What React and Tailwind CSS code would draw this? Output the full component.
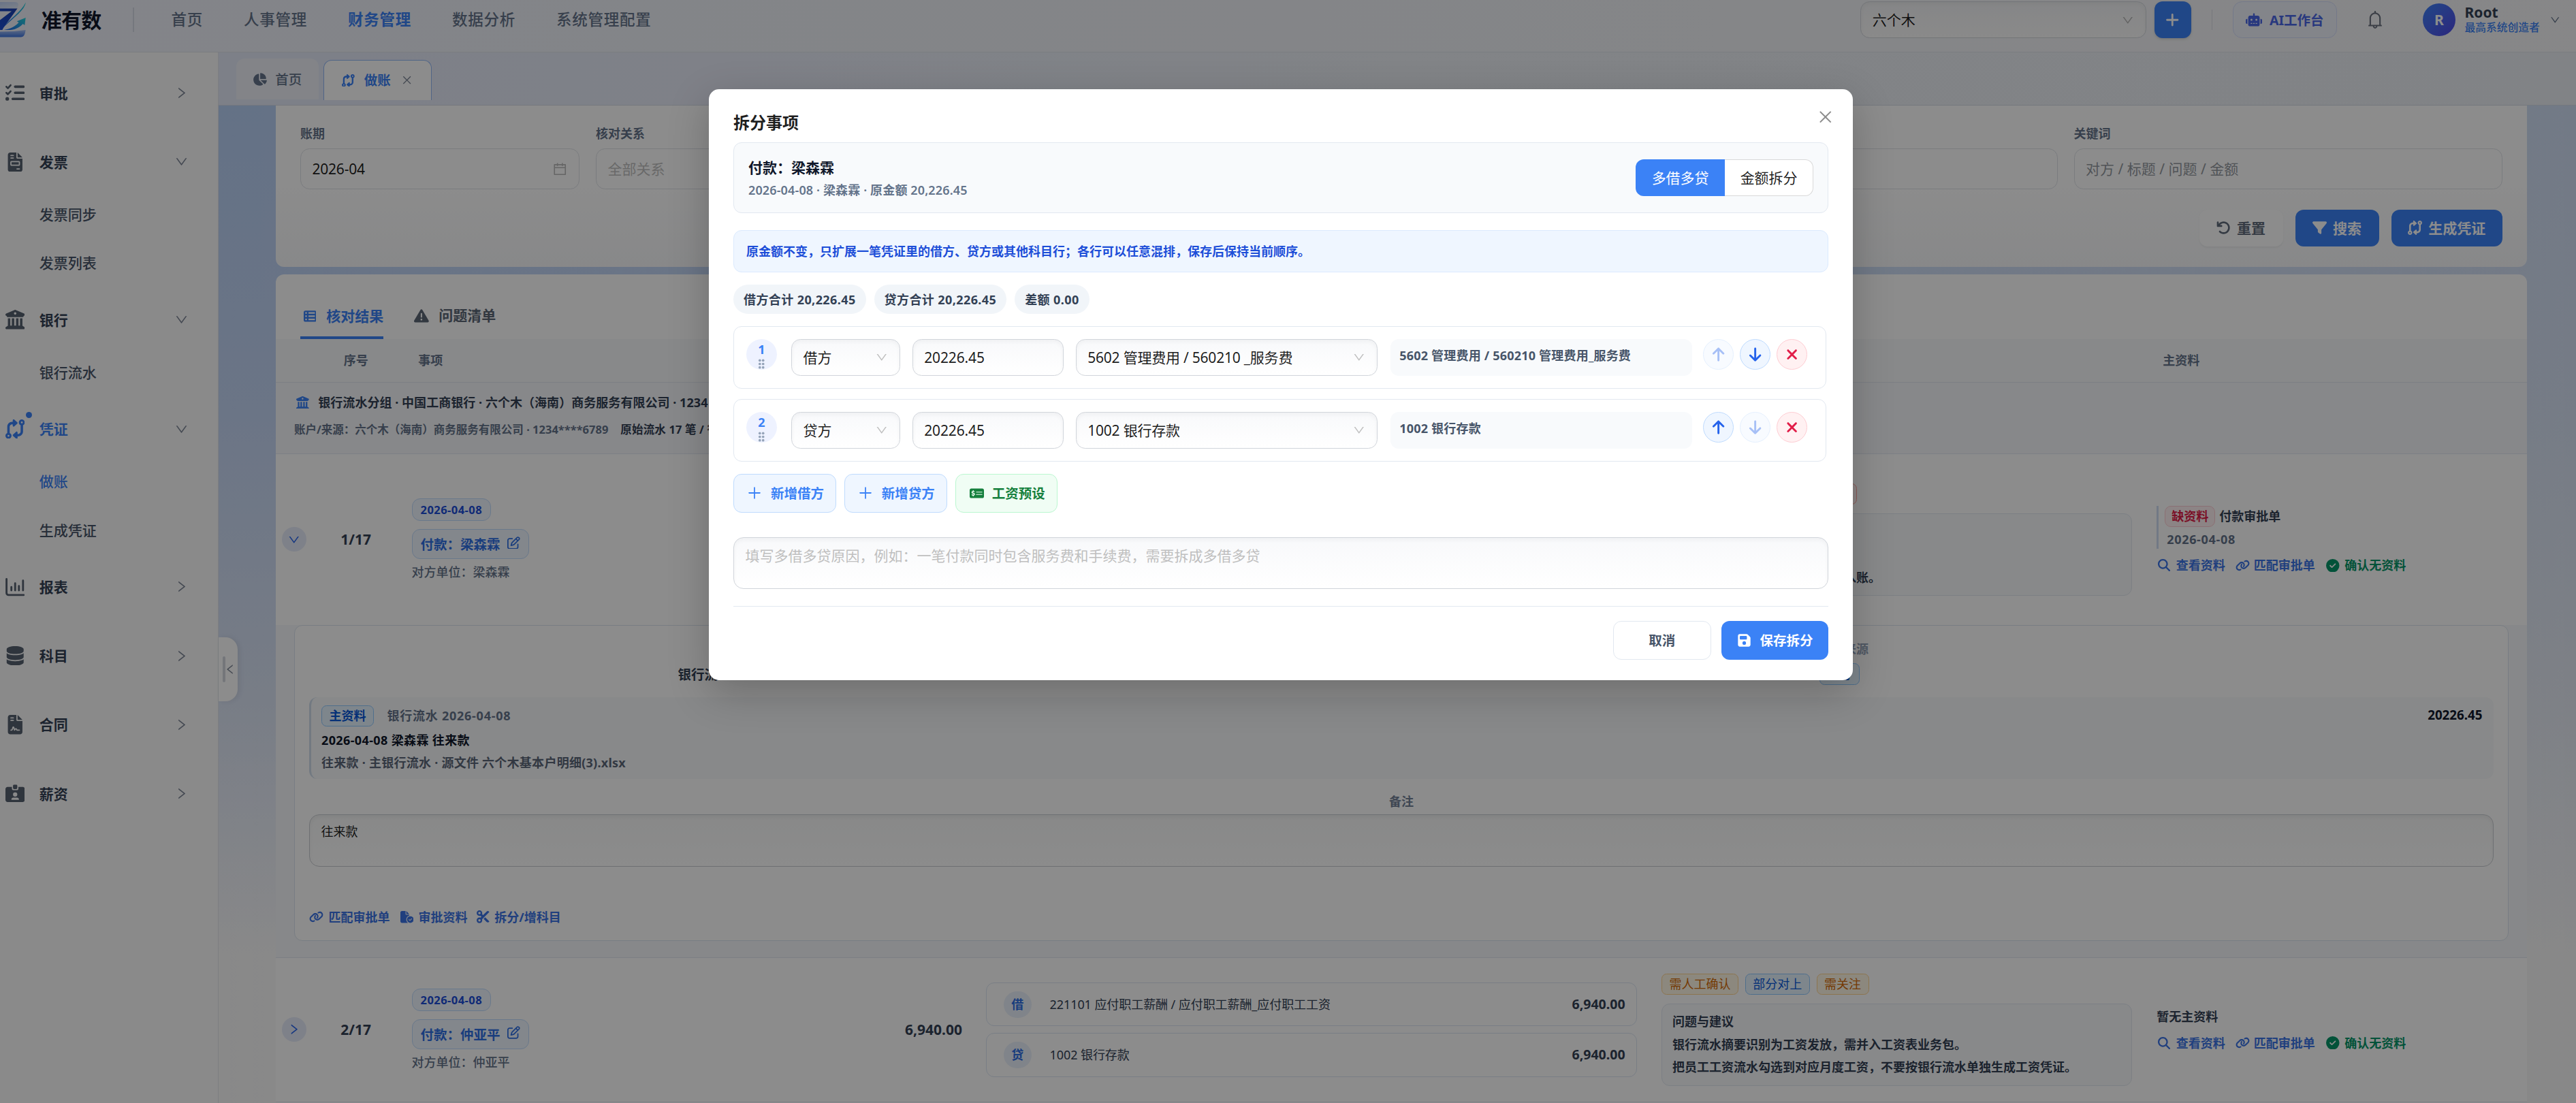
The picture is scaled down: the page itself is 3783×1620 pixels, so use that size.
import React from 'react';
import {
  AiOutlineDown,
  AiOutlineRight,
  AiOutlineLeft,
  AiOutlineClose,
  AiOutlineCalendar,
  AiOutlinePlus,
  AiOutlineBell,
} from 'react-icons/ai';
import {
  FaListCheck,
  FaFileInvoice,
  FaBuildingColumns,
  FaCodeCompare,
  FaDatabase,
  FaFileContract,
  FaIdCardClip,
  FaChartPie,
  FaRobot,
  FaArrowRotateLeft,
  FaFilter,
  FaTableList,
  FaTriangleExclamation,
  FaRegPenToSquare,
  FaLink,
  FaMagnifyingGlass,
  FaCircleCheck,
  FaScissors,
  FaFileCircleCheck,
  FaFloppyDisk,
  FaMoneyCheckDollar,
  FaPlus,
  FaArrowUp,
  FaArrowDown,
  FaXmark,
} from 'react-icons/fa6';

const ReportIcon = ({ className }) => (
  <svg viewBox="0 0 18 18" className={className} width="1em" height="1em" fill="none" stroke="currentColor" strokeWidth="1.8" strokeLinecap="round">
    <path d="M1 1.500v13a1.800 1.800 0 0 0 1.800 1.800H17" />
    <path d="M5.500 12V9M9 12V5.500M12.500 12V8M16.300 12V3" />
  </svg>
);

// drag handle, two columns of three dots
const GripIcon = ({ className }) => (
  <svg viewBox="0 0 7 11" className={className} fill="currentColor">
    <circle cx="1.700" cy="1.700" r="1.350" />
    <circle cx="5.300" cy="1.700" r="1.350" />
    <circle cx="1.700" cy="5.500" r="1.350" />
    <circle cx="5.300" cy="5.500" r="1.350" />
    <circle cx="1.700" cy="9.300" r="1.350" />
    <circle cx="5.300" cy="9.300" r="1.350" />
  </svg>
);

const navItems = ['首页', '人事管理', '财务管理', '数据分析', '系统管理配置'];

const menuGroups = [
  { label: '审批', icon: FaListCheck },
  { label: '发票', icon: FaFileInvoice, children: ['发票同步', '发票列表'] },
  { label: '银行', icon: FaBuildingColumns, children: ['银行流水'] },
  { label: '凭证', icon: FaCodeCompare, children: ['做账', '生成凭证'], active: true },
  { label: '报表', icon: ReportIcon },
  { label: '科目', icon: FaDatabase },
  { label: '合同', icon: FaFileContract },
  { label: '薪资', icon: FaIdCardClip },
];

const splitLines = [
  { no: 1, side: '借方', amount: '20226.45', account: '5602 管理费用 / 560210 _服务费', desc: '5602 管理费用 / 560210 管理费用_服务费' },
  { no: 2, side: '贷方', amount: '20226.45', account: '1002 银行存款', desc: '1002 银行存款' },
];

const tagStyles = {
  orange: 'border-[#ffd591] bg-[#fff7e6] text-[#d46b08]',
  blue: 'border-[#91caff] bg-[#e6f4ff] text-[#0958d9]',
  red: 'border-[#ffa39e] bg-[#fff1f0] text-[#cf1322]',
};

const Logo = () => (
  <div className="flex h-[36px] w-[25px] shrink-0 justify-end overflow-hidden">
    <svg viewBox="0 0 36 36" className="h-[36px] w-[36px] shrink-0">
      <defs>
        <linearGradient id="logoPale" x1="0" y1="0" x2="1" y2="1">
          <stop offset="0" stopColor="#b9cdf5" />
          <stop offset="1" stopColor="#e4ecfa" />
        </linearGradient>
        <linearGradient id="logoBlue" x1="0" y1="1" x2="1" y2="0">
          <stop offset="0" stopColor="#1d4fd8" />
          <stop offset="1" stopColor="#1a3fae" />
        </linearGradient>
        <linearGradient id="logoBase" x1="0" y1="0" x2="0" y2="1">
          <stop offset="0" stopColor="#a9c2f3" />
          <stop offset="1" stopColor="#3b74e0" />
        </linearGradient>
        <linearGradient id="logoCyan" x1="0" y1="1" x2="1" y2="0">
          <stop offset="0" stopColor="#2563eb" />
          <stop offset="1" stopColor="#22d3d8" />
        </linearGradient>
      </defs>
      <path d="M2 .7h23c3 0 4 1.500 3.500 3.500L27.500 7H2z" fill="url(#logoPale)" />
      <path d="M2 7h25.700L14 26l-1 2H2v-3L22 9.600H2z" fill="url(#logoBlue)" />
      <path d="M2 29.500c12 .5 24 0 33.700-1.500-.5 4.500-1.700 7-4.700 7H2z" fill="url(#logoBase)" />
      <path d="M35.900 1C34.500 9 26 14 14 25.500 20 17 31 11 35.900 1z" fill="url(#logoCyan)" />
      <path d="M14.500 27.700c6-.3 11-3 14.500-7l-1.800-1.200 8.600-3.500-1 7.300-1.700-1.300c-4 4.500-10 7-18.600 5.700z" fill="url(#logoCyan)" />
    </svg>
  </div>
);

const Header = () => (
  <header className="h-[51px] shrink-0 border-b border-[#dfe3ea] bg-linear-to-r from-[#eef1fa] via-[#f0f3f7] to-[#f6f6f7]">
    <div className="flex h-[39px] items-center">
      <Logo />
      <span className="ml-[15.500px] text-[20px] font-bold tracking-[-0.5px] text-[#0f172a]">准有数</span>
      <span className="ml-[31px] h-6 w-px bg-[#d5dbe5]" />
      <nav className="ml-[36.700px] flex gap-10">
        {navItems.map((item) => (
          <a
            key={item}
            className={
              item === '财务管理'
                ? 'text-[15px] font-bold tracking-[0.5px] text-[#3b82f6]'
                : 'text-[15px] font-medium tracking-[0.5px] text-[#64748b]'
            }
          >
            {item}
          </a>
        ))}
      </nav>
      <div className="ml-auto flex items-center">
        <div className="flex h-9 w-[279.500px] items-center justify-between rounded-[9px] border border-[#d1d5db] bg-linear-to-b from-[#f3f4f6] to-[#fbfbfb] px-[11px] text-sm text-black/90 shadow-[inset_0_2px_4px_rgba(0,0,0,0.04)]">
          <span>六个木</span>
          <AiOutlineDown className="text-[13px] text-[#b4b4b4]" />
        </div>
        <button className="ml-2 flex h-9 w-9 items-center justify-center rounded-lg bg-[#3b82f6] text-white shadow-sm">
          <FaPlus className="text-[15px]" />
        </button>
        <span className="ml-5 h-5 w-px bg-[#d9dde3]" />
        <button className="ml-5 flex h-9 w-[102px] items-center justify-center gap-[7px] rounded-[9px] border border-[#d3dcfa] bg-[#eef2fb] text-[13px] font-bold text-[#4a66e6]">
          <FaRobot className="text-[16px]" />
          AI工作台
        </button>
        <AiOutlineBell className="ml-[27px] text-[20px] text-[#6b7280]" />
        <span className="ml-[37px] flex h-8 w-8 items-center justify-center rounded-full bg-linear-to-br from-[#3b82f6] to-[#4f46e5] text-sm font-bold text-white">
          R
        </span>
        <div className="ml-[9px] w-[73px]">
          <div className="text-sm leading-[15px] font-bold text-[#334155]">Root</div>
          <div className="text-[10.500px] leading-[15px] font-medium whitespace-nowrap text-[#3b82f6]">最高系统创造者</div>
        </div>
        <AiOutlineDown className="mr-[15px] ml-[10px] text-[11px] text-[#64748b]" />
      </div>
    </div>
  </header>
);

const Sidebar = () => (
  <aside className="w-[214px] shrink-0 border-r border-[#e3e6ec] bg-[#fcfcfc] pt-[20px]">
    {menuGroups.map(({ label, icon: Icon, children, active }) => (
      <div key={label} className={children ? 'mb-[15.500px]' : 'mb-[27.500px]'}>
        <div className={`flex h-10 items-center text-sm font-bold ${active ? 'text-[#3b82f6]' : 'text-[#334155]'}`}>
          <span className="relative ml-[5px] flex w-[19px] justify-center">
            <Icon className={active ? 'text-[19px]' : 'text-[19px] text-[#566170]'} />
            {active && <span className="absolute -top-[7px] -right-[7px] h-[6px] w-[6px] rounded-full bg-[#3b82f6]" />}
          </span>
          <span className="ml-[14.500px]">{label}</span>
          {children ? (
            <AiOutlineDown className="mr-[29px] ml-auto text-[14px] text-[#7d8696]" />
          ) : (
            <AiOutlineRight className="mr-[28.500px] ml-auto text-[14px] text-[#7d8696]" />
          )}
        </div>
        {children && (
          <div className="mt-[11.500px] flex flex-col gap-[7.500px]">
            {children.map((child) => (
              <div
                key={child}
                className={`mr-[26px] flex h-10 items-center rounded-r-lg pl-[38.500px] text-sm font-medium ${
                  child === '做账' ? 'text-[#3b82f6]' : 'text-[#475569]'
                }`}
              >
                {child}
              </div>
            ))}
          </div>
        )}
      </div>
    ))}
  </aside>
);

const TabBar = () => (
  <div className="flex h-[52.300px] shrink-0 items-start gap-[4.500px] border-b border-[#d5dae6] bg-linear-to-r from-[#e3e9f8] via-[#edf0f6] to-[#eceff5] pt-[6.500px] pl-[17px]">
    <div className="flex h-10 w-[81px] items-center justify-center gap-[8px] rounded-lg rounded-b-none bg-[#eef1f8] text-[13px] font-medium text-[#64748b]">
      <FaChartPie className="text-[14px]" />
      首页
    </div>
    <div className="mt-px flex h-[39.500px] w-[106px] items-center justify-center gap-[9px] rounded-lg rounded-b-none border border-b-0 border-[#93b8f5] bg-white text-[13px] font-bold text-[#3b82f6]">
      <FaCodeCompare className="text-[12.500px]" />
      <span>做账</span>
      <AiOutlineClose className="ml-px text-[11.500px] text-[#7d8696]" />
    </div>
  </div>
);

const Field = ({ label, value, placeholder, icon, grow }) => (
  <div className={grow ? 'flex-1' : 'w-[273.400px] shrink-0'}>
    <div className="h-[14px] text-xs leading-[14px] font-bold text-[#64748b]">{label}</div>
    <div className="mt-[7px] flex h-10 items-center justify-between rounded-[9px] border border-[#dfe2e7] bg-white px-[11px] text-sm">
      {value ? <span className="tracking-[-0.150px] text-black/90">{value}</span> : <span className={grow ? 'text-[#94999f]' : 'text-[#bfbfbf]'}>{placeholder}</span>}
      {icon}
    </div>
  </div>
);

const FilterCard = () => (
  <section className="h-[158.100px] shrink-0 rounded-b-lg bg-linear-to-b from-white via-white to-[#f7f8fa] px-6 pt-[21px]">
    <div className="flex gap-4">
      <Field label="账期" value="2026-04" icon={<AiOutlineCalendar className="text-[15px] text-[#b8b8b8]" />} />
      <Field label="核对关系" placeholder="全部关系" />
      <Field />
      <Field />
      <Field />
      <Field />
      <Field label="关键词" placeholder="对方 / 标题 / 问题 / 金额" grow />
    </div>
    <div className="mt-[20px] flex justify-end gap-3 text-sm font-bold">
      <button className="flex h-9 items-center gap-[6px] rounded-lg bg-white px-[17px] text-[#5f6b7a] shadow-[0_1px_2px_rgba(0,0,0,0.05)]">
        <FaArrowRotateLeft className="text-[14px]" />
        重置
      </button>
      <button className="flex h-9 items-center gap-[6px] rounded-lg bg-[#3b82f6] px-[17px] text-white">
        <FaFilter className="text-[14px]" />
        搜索
      </button>
      <button className="flex h-9 items-center gap-[6px] rounded-lg bg-[#3b82f6] px-[16.500px] text-white">
        <FaCodeCompare className="text-[14px]" />
        生成凭证
      </button>
    </div>
  </section>
);

const rowGrid = 'grid grid-cols-[36px_85px_362px_200px_661.700px_484.800px_1fr] items-center';

const Tag = ({ color, bold, children }) => (
  <span className={`inline-flex h-[21px] items-center rounded-[5px] border px-[7px] text-xs ${bold ? 'font-bold' : ''} ${tagStyles[color]}`}>
    {children}
  </span>
);

const Subject = ({ name }) => (
  <div className="flex flex-col items-start px-3">
    <span className="flex h-[22px] items-center rounded-lg border border-[#bfdbfe] bg-[#eff6ff] px-2 pt-px text-[11px] font-bold tracking-[0.3px] text-[#1d4ed8]">
      2026-04-08
    </span>
    <span className="mt-2 flex h-[29px] items-center gap-[7px] rounded-lg border border-[#bfdbfe] bg-[#eff6ff] px-2 pt-px text-[13px] font-bold text-[#2f6fe4]">
      付款：{name}
      <FaRegPenToSquare className="-mt-[4px] text-[12.500px]" />
    </span>
    <span className="mt-[5px] text-xs leading-4 font-medium text-[#64748b]">对方单位：{name}</span>
  </div>
);

const MaterialLinks = () => (
  <div className="flex items-center text-xs font-bold text-[#3b74e6]">
    <FaMagnifyingGlass className="mr-[6px] ml-px text-[12px]" />
    查看资料
    <FaLink className="mr-[4px] ml-[10px] text-[14px]" />
    匹配审批单
    <FaCircleCheck className="mr-[5px] ml-[11px] text-[13px] text-[#059669]" />
    <span className="text-[#059669]">确认无资料</span>
  </div>
);

const Issues = ({ tags, lines }) => (
  <div className="px-3">
    <div className="flex gap-[6.500px]">{tags}</div>
    <div className="mt-[8.500px] h-[80.500px] rounded-lg border border-[#e2e8f0] bg-[#f8fafc] px-[10px] pt-[6px] text-xs leading-[22.500px] font-bold text-[#334155]">
      {lines.map((line) => (
        <div key={line}>{line}</div>
      ))}
    </div>
  </div>
);

const Entry = ({ side, account, amount }) => (
  <div className="flex h-[43px] items-center rounded-lg border border-[#dce6f3] bg-white pr-[11px] pl-[17px] text-xs text-[#334155]">
    <span className="flex h-[26px] w-[27px] items-center justify-center rounded-full bg-[#eaf1fb] font-bold text-[#2f6fe4]">{side}</span>
    <span className="ml-[18px] tracking-[-0.050px]">{account}</span>
    <span className="ml-auto text-[13px] font-bold text-[#334155]">{amount}</span>
  </div>
);

const DetailPanel = () => (
  <div className="h-[326px] shrink-0 border-b border-[#e2e8f0] bg-[#f6f8fb] px-[18px]">
    <div className="h-[309.500px] rounded-lg border border-[#dbe4ee] bg-white px-[14px]">
      <div className="flex h-[70px] justify-between">
        <span className="mt-[38px] ml-[361px] text-[13px] leading-5 font-bold text-[#334155]">银行流</span>
        <div className="mt-[14px] mr-[621px] flex flex-col items-end text-xs font-bold text-[#94a3b8]">
          <span className="-mr-[9px] leading-[18px]">来源</span>
          <span className="mt-[5px] flex"><Tag color="blue" bold>银行</Tag></span>
        </div>
      </div>
      <div className="flex h-[80.500px] justify-between rounded-lg border-l-2 border-[#cfddec] bg-[#f8fafc] pt-2 pr-[11px] pl-[10px] text-xs font-bold">
        <div>
          <div className="flex h-[21px] items-center gap-[13px] text-[#64748b]">
            <Tag color="blue" bold>主资料</Tag>
            <span className="tracking-[0.500px]">银行流水 2026-04-08</span>
          </div>
          <div className="mt-[3.500px] leading-5 tracking-[0.250px] text-[#0f172a]">2026-04-08 梁森霖 往来款</div>
          <div className="mt-[1.500px] leading-5 tracking-[0.170px] text-[#5b6778]">往来款 · 主银行流水 · 源文件 六个木基本户明细(3).xlsx</div>
        </div>
        <span className="h-[20px] text-[12.500px] leading-[18px] text-[#0f172a]">20226.45</span>
      </div>
      <div className="mt-[13.500px] text-center text-xs leading-4 font-bold text-[#718096]">备注</div>
      <div className="mt-[5px] h-[51px] rounded-[10px] border border-[#c9ccd1] bg-linear-to-b from-[#f8f9f9] to-white px-[11px] pt-[7px] text-xs leading-[18px] text-black/90 shadow-[inset_0_2px_4px_rgba(0,0,0,0.05)]">
        往来款
      </div>
      <div className="mt-[41.500px] flex items-center text-xs leading-4 font-bold text-[#3b74e6]">
        <FaLink className="mr-[5px] text-[14px]" />
        匹配审批单
        <FaFileCircleCheck className="mr-[5px] ml-[10px] text-[13px]" />
        审批资料
        <FaScissors className="mr-[5px] ml-[9px] text-[12.500px]" />
        拆分/增科目
      </div>
    </div>
  </div>
);

const ResultCard = () => (
  <section className="mt-[7.200px] flex flex-1 flex-col rounded-t-lg bg-white text-[#334155]">
    <div className="flex h-[63.400px] shrink-0 items-end gap-[30px] px-6 text-sm font-bold">
      <div className="border-b-[3px] border-[#3b82f6] pb-[10px] text-[#3b82f6]">
        <span className="flex items-center gap-[10px] pl-[3px]">
          <FaTableList className="text-[12.500px]" />
          核对结果
        </span>
      </div>
      <div className="pb-[13px] text-[#5b6675]">
        <span className="flex items-center gap-[9.500px]">
          <FaTriangleExclamation className="text-[14.500px]" />
          问题清单
        </span>
      </div>
    </div>
    <div className={`${rowGrid} h-[42.500px] shrink-0 border-b border-[#e2e8f0] bg-[#f8fafc] text-xs font-bold text-[#64748b]`}>
      <span />
      <span className="text-center">序号</span>
      <span className="pl-[18.500px]">事项</span>
      <span />
      <span />
      <span />
      <span className="pl-[18px]">主资料</span>
    </div>
    <div className="h-[70.500px] shrink-0 border-b border-[#e2e8f0] bg-[#f6f8fb] px-[18px] pt-[10px] font-bold whitespace-nowrap">
      <div className="flex h-[19px] items-center text-xs">
        <FaBuildingColumns className="mr-[9px] ml-[2px] text-[12.500px] text-[#3b82f6]" />
        <span className="tracking-[0.030px]">银行流水分组 · 中国工商银行 · 六个木（海南）商务服务有限公司 · 1234</span>
      </div>
      <div className="mt-[9px] flex gap-3 text-[11px] leading-4">
        <span className="text-[#64748b]">账户/来源：六个木（海南）商务服务有限公司 · 1234****6789</span>
        <span className="tracking-[0.100px]">原始流水 17 笔 / 待</span>
      </div>
    </div>
    <div className={`${rowGrid} h-[166.700px] shrink-0`}>
      <span className="ml-[6px] flex h-6 w-6 items-center justify-center rounded-full bg-[#e6ebfa] text-[#2563eb]">
        <AiOutlineDown className="text-[13px]" />
      </span>
      <span className="text-center text-sm font-bold">1/17</span>
      <Subject name="梁森霖" />
      <span />
      <span />
      <Issues
        tags={
          <>
            <Tag color="orange">需人工确认</Tag>
            <Tag color="red">资料缺失</Tag>
            <Tag color="red">异常</Tag>
          </>
        }
        lines={['问题与建议', '当前事项缺少付款审批单。', '缺少付款审批单，补齐资料后再入账。']}
      />
      <div className="px-3">
        <div className="h-[42px] border-l-2 border-[#cfddf2] pl-[6px] text-xs font-bold">
          <div className="flex items-center gap-1">
            <span className="flex h-[21px] items-center rounded-md border border-[#fecdd3] bg-[#fff1f2] px-[6px] text-[#e11d48]">缺资料</span>
            付款审批单
          </div>
          <div className="ml-[2px] leading-6 tracking-[0.450px] text-[#64748b]">2026-04-08</div>
        </div>
        <div className="mt-[8.500px]">
          <MaterialLinks />
        </div>
      </div>
    </div>
    <DetailPanel />
    <div className={`${rowGrid} h-[141.600px] shrink-0 border-b border-[#e2e8f0]`}>
      <span className="ml-[6px] flex h-6 w-6 items-center justify-center rounded-full bg-[#e6ebfa] text-[#2563eb]">
        <AiOutlineRight className="text-[13px]" />
      </span>
      <span className="text-center text-sm font-bold">2/17</span>
      <Subject name="仲亚平" />
      <span className="pr-[11px] text-right text-sm font-bold">6,940.00</span>
      <div className="flex flex-col gap-[6.500px] px-3">
        <Entry side="借" account="221101 应付职工薪酬 / 应付职工薪酬_应付职工工资" amount="6,940.00" />
        <Entry side="贷" account="1002 银行存款" amount="6,940.00" />
      </div>
      <Issues
        tags={
          <>
            <Tag color="orange">需人工确认</Tag>
            <Tag color="blue">部分对上</Tag>
            <Tag color="orange">需关注</Tag>
          </>
        }
        lines={['问题与建议', '银行流水摘要识别为工资发放，需并入工资表业务包。', '把员工工资流水勾选到对应月度工资，不要按银行流水单独生成工资凭证。']}
      />
      <div className="px-3 text-xs font-bold">
        暂无主资料
        <div className="mt-[10px]">
          <MaterialLinks />
        </div>
      </div>
    </div>
  </section>
);

const CollapseHandle = () => (
  <div className="absolute top-[624px] left-[214px] flex h-[62.500px] w-[18.500px] items-center rounded-r-xl bg-white pl-[4px] shadow-[2px_0_6px_rgba(0,0,0,0.08)]">
    <span className="h-[25px] w-[2.500px] rounded-full bg-[#d3d7de]" />
    <AiOutlineLeft className="-ml-px text-[12px] text-[#7d8696]" />
  </div>
);

const boxShade = 'border border-[#d1d5db] bg-linear-to-b from-[#f8f9fb] to-white shadow-[inset_0_2px_4px_rgba(0,0,0,0.04)]';

const RoundButton = ({ icon: Icon, tone, disabled }) => (
  <button
    className={`flex h-[30px] w-[30px] items-center justify-center rounded-full border ${
      tone === 'danger' ? 'border-[#fecdd3] bg-[#fff1f2] text-[#e11d48]' : 'border-[#bfdbfe] bg-[#eff6ff] text-[#2563eb]'
    } ${disabled ? 'opacity-40' : ''}`}
  >
    <Icon className="text-[15.500px]" />
  </button>
);

const SplitRow = ({ line, isFirst, isLast }) => (
  <div className="flex h-[61.300px] w-[1070px] items-start rounded-lg border border-[#e2e8f0] bg-white pt-[12px] pl-[12px]">
    <div className="flex h-[30px] w-[30px] flex-col items-center rounded-full bg-[#eef2ff] pt-[4px] text-xs leading-[13px] font-bold text-[#3b82f6]">
      {line.no}
      <GripIcon className="mt-[2.500px] h-[10px] w-[7px] text-[#94a3b8]" />
    </div>
    <div className={`ml-[14px] flex h-9 w-[106.500px] items-center justify-between rounded-[9px] px-[11px] text-sm text-black/90 ${boxShade}`}>
      {line.side}
      <AiOutlineDown className="text-[13px] text-[#bfbfbf]" />
    </div>
    <div className={`ml-[12px] flex h-9 w-[148px] items-center rounded-[9px] px-[11px] text-sm tracking-[-0.100px] text-black/90 ${boxShade}`}>{line.amount}</div>
    <div className={`ml-[12px] flex h-9 w-[295.500px] items-center justify-between rounded-[9px] px-[11px] text-sm tracking-[-0.150px] text-black/90 ${boxShade}`}>
      {line.account}
      <AiOutlineDown className="text-[13px] text-[#bfbfbf]" />
    </div>
    <div className="ml-[12.500px] h-9 w-[295.500px] rounded-lg bg-[#f8fafc] px-[9px] text-xs leading-8 font-bold tracking-[0.130px] text-[#475569]">{line.desc}</div>
    <div className="ml-[10.800px] flex gap-[6px]">
      <RoundButton icon={FaArrowUp} disabled={isFirst} />
      <RoundButton icon={FaArrowDown} disabled={isLast} />
      <RoundButton icon={FaXmark} tone="danger" />
    </div>
  </div>
);

const SplitModal = () => (
  <div className="absolute inset-0 bg-black/45">
    <div className="absolute top-[87.300px] left-[694px] flex h-[578.700px] w-[1120px] flex-col rounded-[10px] bg-white px-6 shadow-[0_12px_40px_rgba(0,0,0,0.22)]">
      <div className="flex h-[52px] items-center justify-between">
        <h2 className="mt-[13px] text-base font-bold text-black/88">拆分事项</h2>
        <AiOutlineClose className="mt-[2px] -mr-[5.500px] text-[17px] text-[#8c8c8c]" />
      </div>
      <div className="flex h-[69.300px] items-center justify-between rounded-lg border border-[#e2e8f0] bg-[#f8fafc] px-[14px]">
        <div className="pt-[2px]">
          <div className="text-sm leading-5 font-bold text-[#0f172a]">付款：梁森霖</div>
          <div className="mt-[2px] text-xs leading-5 font-semibold tracking-[0.090px] text-[#64748b]">2026-04-08 · 梁森霖 · 原金额 20,226.45</div>
        </div>
        <div className="flex h-9 text-sm">
          <span className="flex w-[87.500px] items-center justify-center rounded-l-lg bg-[#3b82f6] text-white">多借多贷</span>
          <span className="flex w-[86.500px] items-center justify-center rounded-r-lg border border-l-0 border-[#d9d9d9] bg-white text-black/88">金额拆分</span>
        </div>
      </div>
      <div className="mt-[16.500px] flex h-[41.500px] items-center rounded-lg border border-[#dbeafe] bg-[#eff6ff] px-3 text-xs font-bold text-[#1d4ed8]">
        原金额不变，只扩展一笔凭证里的借方、贷方或其他科目行；各行可以任意混排，保存后保持当前顺序。
      </div>
      <div className="mt-[12.300px] flex h-[28.500px] gap-2 text-xs font-bold tracking-[0.270px] text-[#334155]">
        <span className="flex items-center rounded-full bg-[#f1f5f9] px-[10px]">借方合计 20,226.45</span>
        <span className="flex items-center rounded-full bg-[#f1f5f9] px-[10px]">贷方合计 20,226.45</span>
        <span className="flex items-center rounded-full bg-[#f1f5f9] px-[10px]">差额 0.00</span>
      </div>
      <div className="mt-[12px] flex flex-col gap-[10px]">
        {splitLines.map((line, index) => (
          <SplitRow key={line.no} line={line} isFirst={index === 0} isLast={index === splitLines.length - 1} />
        ))}
      </div>
      <div className="mt-[12px] flex h-[38px] gap-2 text-[13px] font-bold">
        <button className="flex w-[100.500px] items-center justify-center gap-[8px] rounded-lg border border-[#bfdbfe] bg-[#eff6ff] pl-px text-[#3b82f6]">
          <AiOutlinePlus className="text-[16px]" />
          新增借方
        </button>
        <button className="flex w-[100.500px] items-center justify-center gap-[8px] rounded-lg border border-[#bfdbfe] bg-[#eff6ff] pl-px text-[#3b82f6]">
          <AiOutlinePlus className="text-[16px]" />
          新增贷方
        </button>
        <button className="flex w-[100.500px] items-center justify-center gap-[8px] rounded-lg border border-[#bbf7d0] bg-[#f0fdf4] pl-[2px] text-[#15803d]">
          <FaMoneyCheckDollar className="text-[14px]" />
          工资预设
        </button>
      </div>
      <div className={`mt-[24px] h-[51px] rounded-[10px] px-[11px] pt-[7px] text-sm leading-[22px] text-[#bfbfbf] ${boxShade}`}>
        填写多借多贷原因，例如：一笔付款同时包含服务费和手续费，需要拆成多借多贷
      </div>
      <div className="mt-[16.300px] flex justify-end gap-[10px] border-t border-[#e2e8f0] pt-[14px] text-[13px] font-bold">
        <button className="h-[38px] w-[95.500px] rounded-lg border border-[#e2e8f0] bg-white text-[#475569]">取消</button>
        <button className="flex h-[38px] w-[105px] items-center justify-center gap-[8px] rounded-lg bg-[#3b82f6] pl-px text-white">
          <FaFloppyDisk className="text-[14px]" />
          保存拆分
        </button>
      </div>
    </div>
  </div>
);

const App = () => {
  return (
    <div className="relative flex h-[1080px] w-[2522px] flex-col overflow-hidden bg-white font-['Noto_Sans','Noto_Sans_CJK_SC',sans-serif] [zoom:1.5]">
      <Header />
      <div className="flex min-h-0 flex-1">
        <Sidebar />
        <main className="flex min-w-0 flex-1 flex-col">
          <TabBar />
          <div className="flex min-h-0 flex-1 flex-col overflow-hidden bg-[linear-gradient(to_right,rgba(245,245,245,0),rgba(245,245,245,0.4)),linear-gradient(to_bottom,#b7cff5_0%,#c3d5f5_30%,#dbe4f5_60%,#f9f9fa_85%)] pr-[48px] pl-[56px]">
            <FilterCard />
            <ResultCard />
          </div>
        </main>
      </div>
      <CollapseHandle />
      <SplitModal />
    </div>
  );
};

export default App;
